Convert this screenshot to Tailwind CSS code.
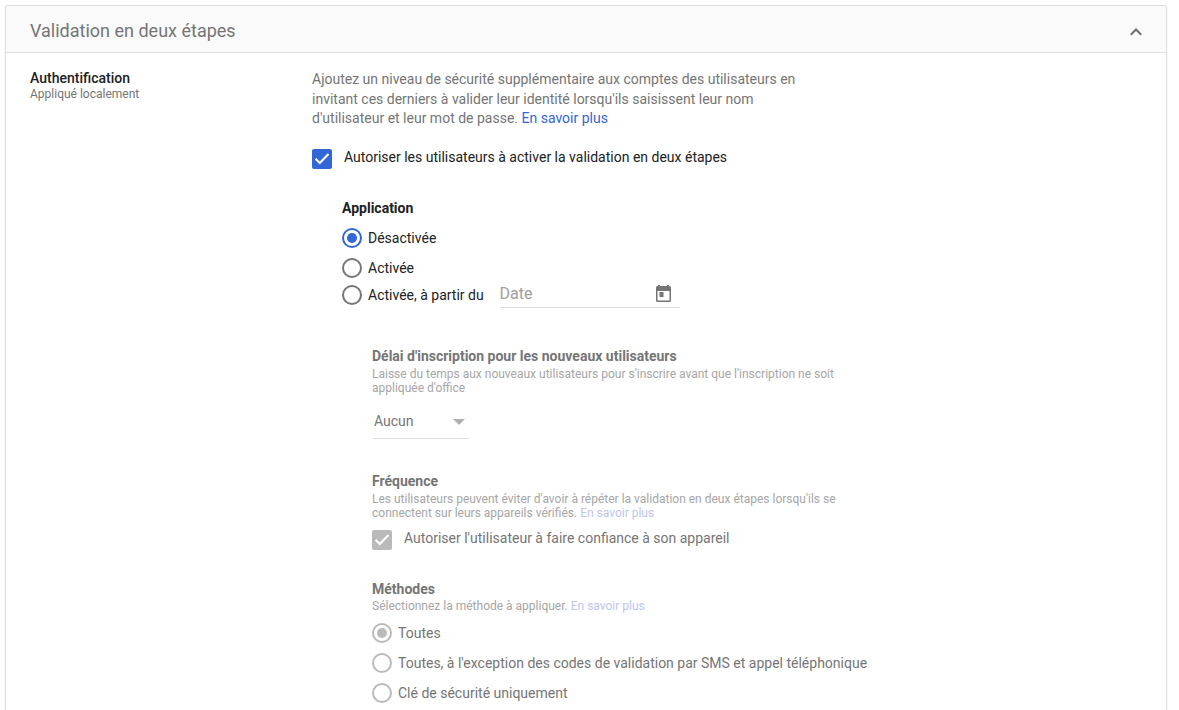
<!DOCTYPE html>
<html lang="fr">
<head>
<meta charset="utf-8">
<title>Validation en deux étapes</title>
<script src="https://cdn.jsdelivr.net/npm/@tailwindcss/browser@4"></script>
</head>
<body class="h-[710px] overflow-hidden bg-white pt-[5px] pl-[5px] font-[Roboto,sans-serif] text-sm leading-5 text-[#212121]">
<main class="h-[705px] w-[1162px] rounded-t-[3px] border border-b-0 border-[#dfdfdf] shadow-[0_1px_2px_rgba(0,0,0,0.08)]">
  <header class="flex h-[47px] items-center justify-between rounded-t-[2px] border-b border-[#dfdfdf] bg-[#fafafa] pr-[24px] pl-6">
    <h1 class="mt-[3px] text-[18px] leading-6 text-[#757575]">Validation en deux étapes</h1>
    <svg class="mt-[5px] h-3 w-3" viewBox="0 0 12 12" fill="none" stroke="#6e6e6e" stroke-width="2"><path d="M.8 8.7 6 3.5l5.200 5.200"/></svg>
  </header>
  <div class="flex whitespace-nowrap">
    <div class="w-[306px] shrink-0 pt-[15px] pl-6">
      <h2 class="font-medium leading-5">Authentification</h2>
      <p class="-mt-px text-xs leading-[14px] text-[#757575]">Appliqué localement</p>
    </div>
    <section class="pt-[17px]">
      <p class="leading-[19.6px] text-[#757575]">Ajoutez un niveau de sécurité supplémentaire aux comptes des utilisateurs en<br>invitant ces derniers à valider leur identité lorsqu'ils saisissent leur nom<br>d'utilisateur et leur mot de passe. <a class="text-[#3367d6]">En savoir plus</a></p>
      <div class="mt-[20.2px] flex h-5 gap-3">
        <svg class="h-5 w-5" viewBox="0 0 20 20"><rect width="20" height="20" rx="2" fill="#3367d6"/><path d="m3.500 9.700 4.300 4.300 8.700-9" fill="none" stroke="#fff" stroke-width="2"/></svg>
        <span class="-mt-[2px]">Autoriser les utilisateurs à activer la validation en deux étapes</span>
      </div>
      <div class="pt-[29px] pl-[30px]">
        <h3 class="font-bold">Application</h3>
        <div class="mt-[10px] flex h-5 gap-[6px]">
          <span class="flex h-5 w-5 items-center justify-center rounded-full border-2 border-[#3367d6]"><i class="h-[10px] w-[10px] rounded-full bg-[#3367d6]"></i></span>
          <span>Désactivée</span>
        </div>
        <div class="mt-[10px] flex h-5 gap-[6px]">
          <span class="h-5 w-5 rounded-full border-2 border-[#757575]"></span>
          <span>Activée</span>
        </div>
        <div class="mt-[2px] flex h-[30px]">
          <span class="mt-[5px] h-5 w-5 rounded-full border-2 border-[#757575]"></span>
          <span class="mt-[5px] ml-[6px] w-[132px]">Activée, à partir du</span>
          <div class="flex h-[28px] w-[180px] justify-between border-b border-[#dedede] pr-[9px]">
            <span class="mt-[2px] -ml-[0.5px] text-base leading-6 text-[#9e9e9e]">Date</span>
            <svg class="mt-[5px] h-[17px] w-[15px]" viewBox="0 0 15 17"><path fill="#757575" fill-rule="evenodd" d="M2 0h2v1h7V0h2v1h.5A1.500 1.500 0 0 1 15 2.500v13A1.500 1.500 0 0 1 13.500 17h-12A1.500 1.500 0 0 1 0 15.500v-13A1.500 1.500 0 0 1 1.500 1H2ZM1.500 6v9.500h12V6ZM3.500 7h4v5h-4Z"/></svg>
          </div>
        </div>
        <div class="pt-[36px] pl-[30px] text-[#757575]">
          <h3 class="font-bold">Délai d'inscription pour les nouveaux utilisateurs</h3>
          <p class="mt-px text-xs leading-[14px] text-[#a6a6a6]">Laisse du temps aux nouveaux utilisateurs pour s'inscrire avant que l'inscription ne soit<br>appliquée d'office</p>
          <div class="mt-[14px] flex h-[30px] w-[98px] justify-between rounded-b-[3px] border-b border-[#dedede] pt-[2px] pr-[5px] pl-[2px]">
            <span>Aucun</span>
            <svg class="mt-[8px] h-[6px] w-[12px]" viewBox="0 0 12 6"><path fill="#b0b0b0" d="M0 0h12L6 6Z"/></svg>
          </div>
          <h3 class="mt-[32px] font-bold">Fréquence</h3>
          <p class="mt-px text-xs leading-[14px] text-[#a6a6a6]">Les utilisateurs peuvent éviter d'avoir à répéter la validation en deux étapes lorsqu'ils se<br>connectent sur leurs appareils vérifiés. <a class="text-[#bcc5ed]">En savoir plus</a></p>
          <div class="mt-[10px] flex h-5 gap-3">
            <svg class="h-5 w-5" viewBox="0 0 20 20"><rect width="20" height="20" rx="2" fill="#bababa"/><path d="m3.500 9.700 4.300 4.300 8.700-9" fill="none" stroke="#fff" stroke-width="2"/></svg>
            <span class="-mt-[2px]">Autoriser l'utilisateur à faire confiance à son appareil</span>
          </div>
          <h3 class="mt-[29px] font-bold">Méthodes</h3>
          <p class="text-xs leading-[14px] text-[#a6a6a6]">Sélectionnez la méthode à appliquer. <a class="text-[#bcc5ed]">En savoir plus</a></p>
          <div class="mt-[10px] flex h-5 gap-[6px]">
            <span class="flex h-5 w-5 items-center justify-center rounded-full border-2 border-[#bababa]"><i class="h-[10px] w-[10px] rounded-full bg-[#bababa]"></i></span>
            <span>Toutes</span>
          </div>
          <div class="mt-[10px] flex h-5 gap-[6px]">
            <span class="h-5 w-5 rounded-full border-2 border-[#bababa]"></span>
            <span>Toutes, à l'exception des codes de validation par SMS et appel téléphonique</span>
          </div>
          <div class="mt-[10px] flex h-5 gap-[6px]">
            <span class="h-5 w-5 rounded-full border-2 border-[#bababa]"></span>
            <span>Clé de sécurité uniquement</span>
          </div>
        </div>
      </div>
    </section>
  </div>
</main>
</body>
</html>
